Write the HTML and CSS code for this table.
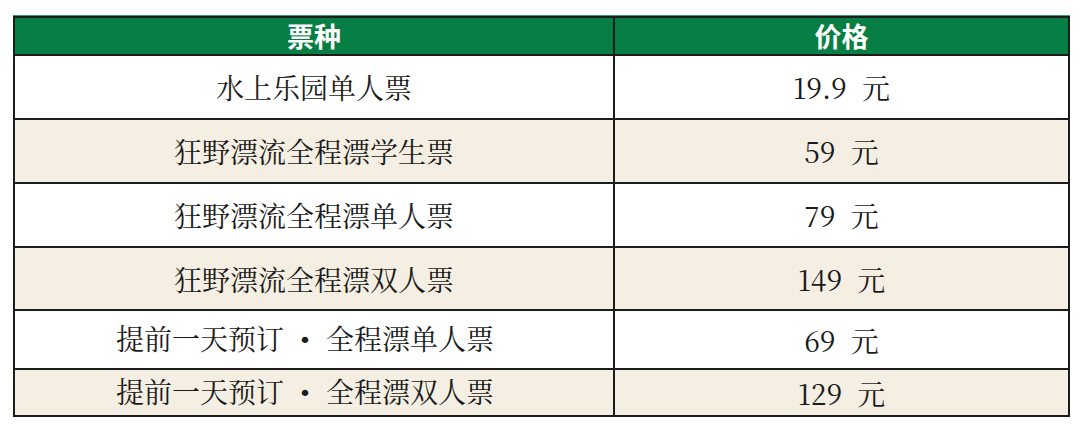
FILE: index.html
```html
<!DOCTYPE html>
<html lang="zh-CN">
<head>
<meta charset="utf-8">
<title>票价</title>
<link rel="stylesheet" href="styles.css">
</head>
<body>
<div class="wrap">
<table class="prices">
  <colgroup><col class="c1"><col class="c2"></colgroup>
  <thead>
    <tr class="r-head"><th>票种</th><th>价格</th></tr>
  </thead>
  <tbody>
    <tr class="r1"><td>水上乐园单人票</td><td class="price">19.9 元</td></tr>
    <tr class="r2 alt"><td>狂野漂流全程漂学生票</td><td class="price">59 元</td></tr>
    <tr class="r3"><td>狂野漂流全程漂单人票</td><td class="price">79 元</td></tr>
    <tr class="r4 alt"><td>狂野漂流全程漂双人票</td><td class="price">149 元</td></tr>
    <tr class="r5"><td class="pre">提前一天预订<span class="dot">•</span>全程漂单人票</td><td class="price">69 元</td></tr>
    <tr class="r6 alt"><td class="pre">提前一天预订<span class="dot">•</span>全程漂双人票</td><td class="price">129 元</td></tr>
  </tbody>
</table>
</div>
</body>
</html>
```

FILE: styles.css
```css
html, body {
  margin: 0;
  padding: 0;
  background: #ffffff;
}
.wrap {
  padding: 16px 0 0 13px;
}
.prices {
  border-collapse: collapse;
  width: 1055px;
  table-layout: fixed;
  box-shadow: 0 -1px 0 #3a9a66;
  font-family: "Noto Serif CJK SC", "Liberation Serif", "Noto Sans CJK SC", serif;
  color: #1b1b1b;
}
.c1 { width: 600px; }
.c2 { width: 455px; }
.prices th, .prices td {
  border: 2px solid #1c1c1c;
  padding: 0;
  text-align: center;
  vertical-align: middle;
}
.prices th {
  background: #077e44;
  color: #ffffff;
  font-family: "Noto Sans CJK SC", sans-serif;
  font-weight: 700;
  font-size: 27px;
  line-height: 30px;
}
.prices td {
  font-size: 28px;
  line-height: 32px;
  font-weight: 400;
}
.alt td { background: #f5efe3; }
.r-head { height: 38px; }
.r1, .r2, .r3 { height: 64px; }
.r4 { height: 63px; }
.r5 { height: 59px; }
.r6 { height: 47px; }
.prices td.price { word-spacing: 8px; }
.prices td.pre { padding-right: 18px; }
.dot {
  display: inline-block;
  width: 42px;
  text-align: center;
  font-family: "DejaVu Sans", sans-serif;
  font-size: 22px;
  vertical-align: 2px;
}
```
